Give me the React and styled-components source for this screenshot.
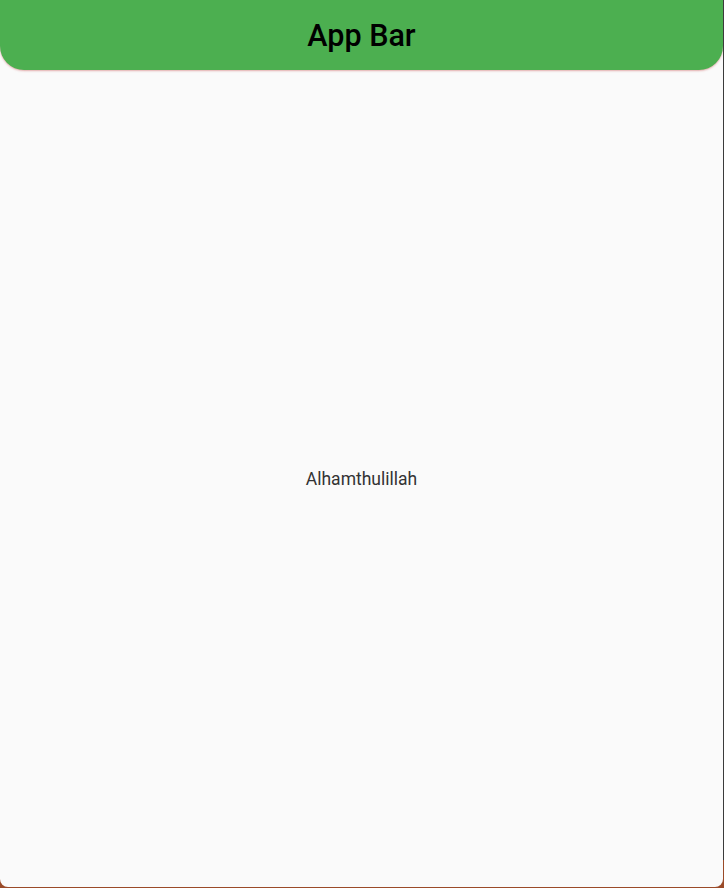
import styled, { createGlobalStyle } from "styled-components"

const GlobalStyle = createGlobalStyle`
    html, body {
        margin: 0;
        padding: 0;
        background-color: #3b3b3b;
    }
    * {
        box-sizing: border-box;
    }
`

export default function App(){
    return(
        <>
            <GlobalStyle />
            <Desktop>
                <Window>
                    <AppBar>
                        <Title>App Bar</Title>
                    </AppBar>
                    <Body>
                        <Message>Alhamthulillah</Message>
                    </Body>
                </Window>
            </Desktop>
        </>
    )
}

const Desktop = styled.div`
    width: 724px;
    height: 888px;
    background: linear-gradient(to bottom, #3b3b3b 0, #3b3b3b 860px, #9a4a28 860px);
    display: flex;
    flex-direction: column;
    align-items: flex-start;
`

const Window = styled.div`
    width: 723px;
    height: 887px;
    background-color: #fafafa;
    border-radius: 0 0 8px 8px;
    display: flex;
    flex-direction: column;
    overflow: hidden;
`

const AppBar = styled.header`
    height: 70px;
    flex-shrink: 0;
    background-color: #4caf50;
    border-radius: 0 0 24px 24px;
    box-shadow: 0 1px 2px rgba(200, 80, 80, 0.45);
    display: flex;
    align-items: center;
    justify-content: center;
    position: relative;
    z-index: 1;
`

const Title = styled.h1`
    margin: 0;
    font-family: Roboto, "Liberation Sans", sans-serif;
    font-size: 30.5px;
    font-weight: 500;
    color: #000;
`

const Body = styled.main`
    flex: 1;
    display: flex;
    align-items: center;
    justify-content: center;
`

const Message = styled.p`
    margin: 0;
    font-family: Roboto, "Liberation Sans", sans-serif;
    font-size: 17.5px;
    font-weight: 400;
    color: #333;
`
